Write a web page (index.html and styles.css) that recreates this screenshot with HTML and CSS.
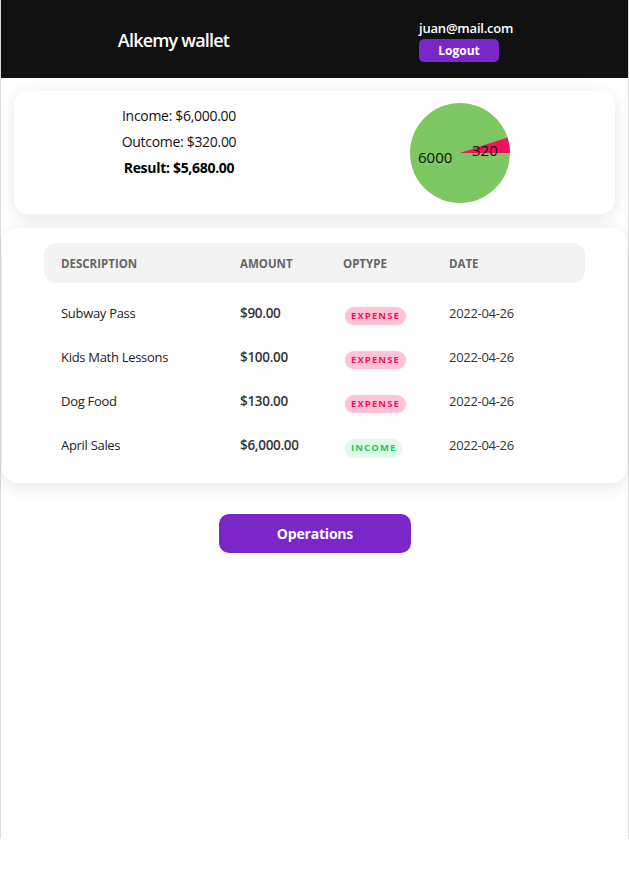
FILE: index.html
```html
<!DOCTYPE html>
<html lang="en">
<head>
<meta charset="utf-8">
<title>Alkemy wallet</title>
<link rel="stylesheet" href="styles.css">
</head>
<body>
<div class="app">
  <header class="topbar">
    <h1 class="brand">Alkemy wallet</h1>
    <div class="user">
      <span class="email">juan@mail.com</span>
      <button class="btn-logout">Logout</button>
    </div>
  </header>

  <section class="card summary">
    <div class="totals">
      <p>Income: $6,000.00</p>
      <p>Outcome: $320.00</p>
      <p class="result">Result: $5,680.00</p>
    </div>
    <div class="chart">
      <svg width="100" height="100" viewBox="0 0 100 100">
        <circle cx="50" cy="50" r="50" fill="#7dc863"/>
        <path d="M50 50 L100 50 A50 50 0 0 0 97.5 34.4 Z" fill="#f1125f"/>
        <text x="8" y="60" class="pie-label">6000</text>
        <text x="62" y="53" class="pie-label">320</text>
      </svg>
    </div>
  </section>

  <section class="card list">
    <div class="row head">
      <span>Description</span>
      <span>Amount</span>
      <span>Optype</span>
      <span>Date</span>
    </div>
    <div class="row">
      <span class="desc">Subway Pass</span>
      <span class="amount">$90.00</span>
      <span><em class="badge expense">Expense</em></span>
      <span class="date">2022-04-26</span>
    </div>
    <div class="row">
      <span class="desc">Kids Math Lessons</span>
      <span class="amount">$100.00</span>
      <span><em class="badge expense">Expense</em></span>
      <span class="date">2022-04-26</span>
    </div>
    <div class="row">
      <span class="desc">Dog Food</span>
      <span class="amount">$130.00</span>
      <span><em class="badge expense">Expense</em></span>
      <span class="date">2022-04-26</span>
    </div>
    <div class="row">
      <span class="desc">April Sales</span>
      <span class="amount">$6,000.00</span>
      <span><em class="badge income">Income</em></span>
      <span class="date">2022-04-26</span>
    </div>
  </section>

  <div class="actions">
    <button class="btn-primary">Operations</button>
  </div>
</div>
</body>
</html>
```

FILE: styles.css
```css
* { box-sizing: border-box; }
html, body { margin: 0; padding: 0; background: #fff; }
body {
  font-family: "Open Sans", "Noto Sans", sans-serif;
  color: #111;
}
.app {
  width: 629px;
  min-height: 839px;
  border-left: 1px solid #dcdcdc;
  border-right: 1px solid #dcdcdc;
  background: #fff;
}
.topbar {
  height: 78px;
  background: #111;
  display: grid;
  grid-template-columns: 345px 1fr;
  align-items: center;
}
.brand {
  margin: 0;
  color: #fff;
  font-size: 18px;
  font-weight: 600;
  letter-spacing: -0.8px;
  text-align: center;
  padding-top: 2px;
}
.user {
  display: flex;
  flex-direction: column;
  align-items: flex-start;
  padding-left: 73px;
  padding-top: 3px;
}
.email {
  color: #fff;
  font-size: 13px;
  font-weight: 600;
  letter-spacing: -0.2px;
  line-height: 16px;
}
.btn-logout {
  margin-top: 3px;
  width: 80px;
  height: 23px;
  border: 0;
  border-radius: 5px;
  background: #7b26c9;
  color: #fff;
  font-family: inherit;
  font-size: 12px;
  font-weight: 700;
  padding: 0;
}
.card {
  background: #fff;
  box-shadow: 0 4px 18px rgba(0, 0, 0, 0.10);
}
.summary {
  margin: 13px 13px 0;
  height: 123px;
  border-radius: 14px;
  display: grid;
  grid-template-columns: 330px 1fr;
  padding-top: 12px;
}
.totals {
  text-align: center;
  font-size: 14px;
  letter-spacing: -0.3px;
  color: #111;
}
.totals p {
  margin: 0;
  line-height: 26px;
}
.totals .result { font-weight: 700; color: #000; }
.chart { padding-left: 66px; }
.chart svg { display: block; }
.pie-label {
  font-family: "Open Sans", sans-serif;
  font-size: 15px;
  fill: #111;
}
.list {
  margin: 14px 1px 0;
  border-radius: 16px;
  padding: 15px 42px 16px;
}
.row {
  display: grid;
  grid-template-columns: 179px 103px 106px 1fr;
  align-items: center;
  height: 44px;
  padding-left: 17px;
  font-size: 13px;
  letter-spacing: -0.3px;
}
.row.head {
  height: 40px;
  margin-bottom: 8px;
  background: #f3f3f3;
  border-radius: 12px;
  font-size: 11.5px;
  font-weight: 700;
  color: #666;
  text-transform: uppercase;
  letter-spacing: 0;
}
.desc { color: #222; }
.amount { font-weight: 600; color: #333; font-size: 13.5px; }
.date { color: #333; }
.badge {
  display: inline-block;
  margin-left: 2px;
  margin-top: 6px;
  font-style: normal;
  font-size: 9.5px;
  font-weight: 700;
  letter-spacing: 1.1px;
  text-transform: uppercase;
  line-height: 18px;
  padding: 0 6px;
  border-radius: 9px;
  box-shadow: 0 1px 3px rgba(0, 0, 0, 0.06);
}
.badge.expense { background: #fec3d5; color: #f1125f; }
.badge.income { background: #dcfce7; color: #22c55e; }
.actions {
  display: flex;
  justify-content: center;
  padding-top: 31px;
}
.btn-primary {
  width: 192px;
  height: 39px;
  border: 0;
  border-radius: 10px;
  background: #7b26c9;
  color: #fff;
  font-family: inherit;
  font-size: 14px;
  font-weight: 700;
  letter-spacing: -0.2px;
  margin-left: 1px;
}
```
